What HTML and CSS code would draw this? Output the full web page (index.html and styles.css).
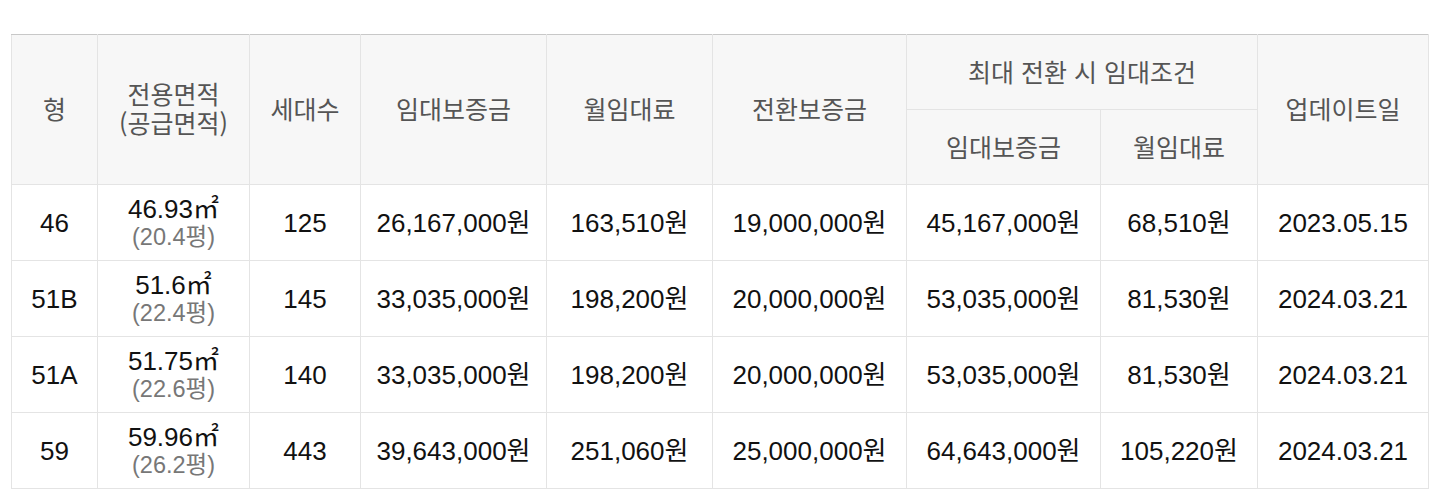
FILE: index.html
```html
<!DOCTYPE html>
<html lang="ko">
<head>
<meta charset="utf-8">
<link rel="stylesheet" href="styles.css">
</head>
<body>
<div class="wrap">
<table class="rent">
  <colgroup>
    <col class="c1"><col class="c2"><col class="c3"><col class="c4"><col class="c5"><col class="c6"><col class="c7"><col class="c8"><col class="c9">
  </colgroup>
  <thead>
    <tr class="h1">
      <th rowspan="2">형</th>
      <th rowspan="2"><span class="ln">전용면적</span><span class="ln">(공급면적)</span></th>
      <th rowspan="2">세대수</th>
      <th rowspan="2">임대보증금</th>
      <th rowspan="2">월임대료</th>
      <th rowspan="2">전환보증금</th>
      <th colspan="2">최대 전환 시 임대조건</th>
      <th rowspan="2">업데이트일</th>
    </tr>
    <tr class="h2">
      <th>임대보증금</th>
      <th>월임대료</th>
    </tr>
  </thead>
  <tbody>
    <tr>
      <td>46</td>
      <td><span class="area">46.93㎡</span><span class="py">(20.4평)</span></td>
      <td>125</td>
      <td>26,167,000원</td>
      <td>163,510원</td>
      <td>19,000,000원</td>
      <td>45,167,000원</td>
      <td>68,510원</td>
      <td>2023.05.15</td>
    </tr>
    <tr>
      <td>51B</td>
      <td><span class="area">51.6㎡</span><span class="py">(22.4평)</span></td>
      <td>145</td>
      <td>33,035,000원</td>
      <td>198,200원</td>
      <td>20,000,000원</td>
      <td>53,035,000원</td>
      <td>81,530원</td>
      <td>2024.03.21</td>
    </tr>
    <tr>
      <td>51A</td>
      <td><span class="area">51.75㎡</span><span class="py">(22.6평)</span></td>
      <td>140</td>
      <td>33,035,000원</td>
      <td>198,200원</td>
      <td>20,000,000원</td>
      <td>53,035,000원</td>
      <td>81,530원</td>
      <td>2024.03.21</td>
    </tr>
    <tr>
      <td>59</td>
      <td><span class="area">59.96㎡</span><span class="py">(26.2평)</span></td>
      <td>443</td>
      <td>39,643,000원</td>
      <td>251,060원</td>
      <td>25,000,000원</td>
      <td>64,643,000원</td>
      <td>105,220원</td>
      <td>2024.03.21</td>
    </tr>
  </tbody>
</table>
</div>
</body>
</html>
```

FILE: styles.css
```css
html, body {
  margin: 0;
  padding: 0;
  background: #fff;
}
.wrap {
  padding: 34px 27px 0 11px;
}
.rent {
  width: 1417px;
  table-layout: fixed;
  border-collapse: collapse;
  border-top: 1px solid #c8c8c8;
  font-family: "Liberation Sans", Arial, "Noto Sans CJK KR", sans-serif;
}
.c1 { width: 86px; }
.c2 { width: 152px; }
.c3 { width: 111px; }
.c4 { width: 186px; }
.c5 { width: 166px; }
.c6 { width: 194px; }
.c7 { width: 194px; }
.c8 { width: 157px; }
.c9 { width: 171px; }
.rent th, .rent td {
  border: 1px solid #e4e4e4;
  text-align: center;
  vertical-align: middle;
  padding: 0;
}
.rent th {
  background: #f7f7f7;
  color: #555;
  font-weight: normal;
  font-family: "Noto Sans CJK KR", sans-serif;
  font-size: 25px;
  line-height: 30px;
  padding-bottom: 3px;
}
.rent .ln {
  display: block;
  line-height: 29px;
}
.rent thead tr { height: 75px; }
.rent thead .h1 th { border-top: 1px solid #c8c8c8; }
.rent td {
  color: #111;
  font-size: 26px;
  line-height: 30px;
  height: 75px;
}
.area, .py {
  display: block;
}
.area {
  line-height: 28px;
}
.py {
  color: #777;
  font-size: 23.5px;
  line-height: 28px;
}
```
